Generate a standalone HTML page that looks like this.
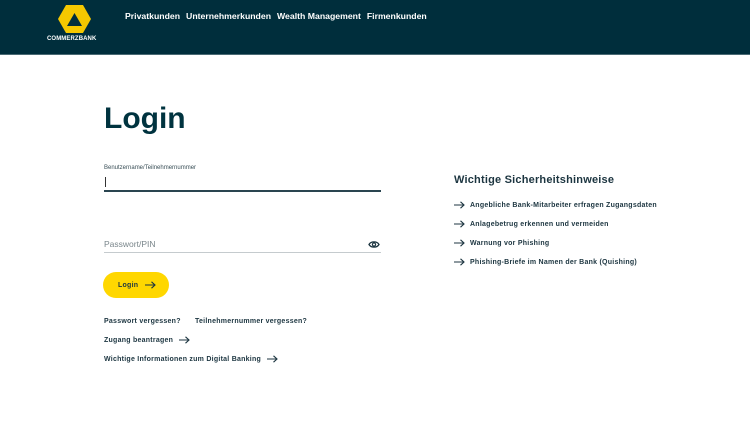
<!DOCTYPE html>
<html><head><meta charset="utf-8"><style>
*{margin:0;padding:0;box-sizing:border-box}
body{width:750px;height:422px;background:#fff;font-family:"Liberation Sans",sans-serif;color:#00333f;position:relative;overflow:hidden}
.hdr{position:absolute;left:0;top:0;width:750px;height:55px;background:#002e3c;border-bottom:1px solid #4a6a74}
.nav{position:absolute;top:11px;left:125px;color:#fff;font-size:8.7px;font-weight:bold}
.nav span{margin-right:6px}
.brand{position:absolute;left:47px;top:36px;color:#fff;font-size:6px;font-weight:bold;letter-spacing:0.1px}
.a{position:absolute;font-size:7px;font-weight:bold;color:#1c3540;white-space:nowrap;letter-spacing:0.25px}
.arr{display:inline-block;vertical-align:middle}
</style></head><body>
<div class="hdr">
<svg style="position:absolute;left:58px;top:5px" width="33" height="28" viewBox="0 0 33 28">
<polygon points="8,0 25,0 33,14 25,28 8,28 0,14" fill="#f5c800"/>
<polygon points="16.5,8 24,21 9,21" fill="#002e3c"/>
</svg>
<div class="brand">COMMERZBANK</div>
<div class="nav"><span>Privatkunden</span><span>Unternehmerkunden</span><span>Wealth Management</span><span>Firmenkunden</span></div>
</div>
<div style="position:absolute;left:104px;top:102px;font-size:30px;font-weight:bold;color:#00333f">Login</div>
<div style="position:absolute;left:104px;top:165px;font-size:6px;color:#3a4f57">Benutzername/Teilnehmernummer</div>
<div style="position:absolute;left:105px;top:177px;width:1px;height:10px;background:#333"></div>
<div style="position:absolute;left:104px;top:190px;width:277px;height:1.5px;background:#2a4550"></div>
<div style="position:absolute;left:104px;top:239px;font-size:8.5px;color:#7a868b">Passwort/PIN</div>
<svg style="position:absolute;left:368px;top:240px" width="12" height="9" viewBox="0 0 12 9"><path d="M1 4.5C3 1 9 1 11 4.5C9 8 3 8 1 4.5Z" fill="none" stroke="#1c3540" stroke-width="1.3"/><circle cx="6" cy="4.5" r="1.6" fill="none" stroke="#1c3540" stroke-width="1.2"/></svg>
<div style="position:absolute;left:104px;top:252px;width:277px;height:1px;background:#c5cbce"></div>
<div style="position:absolute;left:103px;top:272px;width:66px;height:26px;border-radius:13px;background:#ffd700"></div>
<div class="a" style="left:118px;top:281px">Login <svg class="arr" width="11" height="8" viewBox="0 0 11 8" style="margin-left:4px"><path d="M0 4H10M6.5 0.8L10 4L6.5 7.2" fill="none" stroke="#1c3540" stroke-width="1.1"/></svg></div>
<div class="a" style="left:104px;top:318px">Passwort vergessen?</div>
<div class="a" style="left:195px;top:318px">Teilnehmernummer vergessen?</div>
<div class="a" style="left:104px;top:336px">Zugang beantragen <svg class="arr" width="11" height="8" viewBox="0 0 11 8" style="margin-left:4px"><path d="M0 4H10M6.5 0.8L10 4L6.5 7.2" fill="none" stroke="#1c3540" stroke-width="1.1"/></svg></div>
<div class="a" style="left:104px;top:355px">Wichtige Informationen zum Digital Banking <svg class="arr" width="11" height="8" viewBox="0 0 11 8" style="margin-left:4px"><path d="M0 4H10M6.5 0.8L10 4L6.5 7.2" fill="none" stroke="#1c3540" stroke-width="1.1"/></svg></div>
<div style="position:absolute;left:454px;top:174px;font-size:11px;font-weight:bold;color:#1c3540;letter-spacing:0.2px">Wichtige Sicherheitshinweise</div>
<div class="a" style="left:454px;top:201px"><svg class="arr" width="11" height="8" viewBox="0 0 11 8" style="margin-right:5px"><path d="M0 4H10M6.5 0.8L10 4L6.5 7.2" fill="none" stroke="#1c3540" stroke-width="1.1"/></svg>Angebliche Bank-Mitarbeiter erfragen Zugangsdaten</div>
<div class="a" style="left:454px;top:220px"><svg class="arr" width="11" height="8" viewBox="0 0 11 8" style="margin-right:5px"><path d="M0 4H10M6.5 0.8L10 4L6.5 7.2" fill="none" stroke="#1c3540" stroke-width="1.1"/></svg>Anlagebetrug erkennen und vermeiden</div>
<div class="a" style="left:454px;top:239px"><svg class="arr" width="11" height="8" viewBox="0 0 11 8" style="margin-right:5px"><path d="M0 4H10M6.5 0.8L10 4L6.5 7.2" fill="none" stroke="#1c3540" stroke-width="1.1"/></svg>Warnung vor Phishing</div>
<div class="a" style="left:454px;top:258px"><svg class="arr" width="11" height="8" viewBox="0 0 11 8" style="margin-right:5px"><path d="M0 4H10M6.5 0.8L10 4L6.5 7.2" fill="none" stroke="#1c3540" stroke-width="1.1"/></svg>Phishing-Briefe im Namen der Bank (Quishing)</div>
</body></html>
